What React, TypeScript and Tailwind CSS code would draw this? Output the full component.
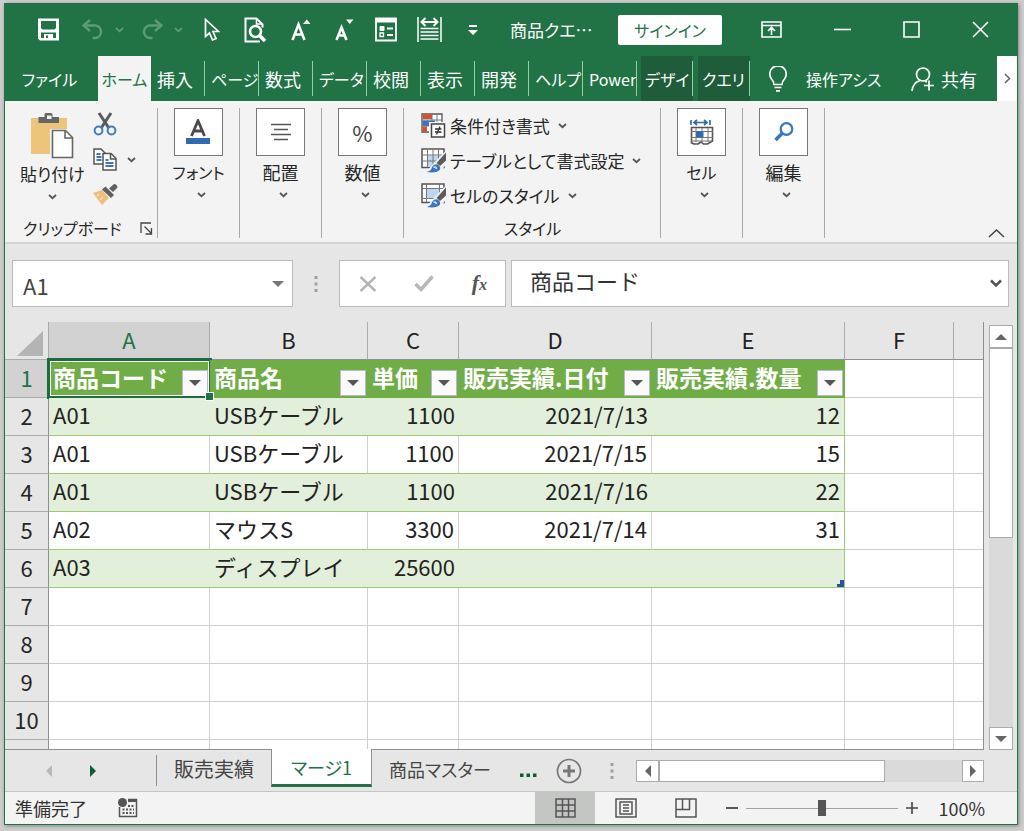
import { useState } from "react";
import type { ReactNode } from "react";

type IconProps = { className?: string };

function Caret({ className = "" }: IconProps) {
  return (
    <svg width="9" height="6" viewBox="0 0 9 6" className={className} fill="none" stroke="currentColor" strokeWidth="1.8">
      <path d="M1 1l3.5 3.2L8 1" />
    </svg>
  );
}

function Triangle({ dir, className = "" }: { dir: "up" | "down" | "left" | "right"; className?: string }) {
  const d = {
    up: "M0 9L6 3l6 6z",
    down: "M0 3h12L6 9z",
    left: "M9 0v12L3 6z",
    right: "M3 0v12l6-6z",
  }[dir];
  return (
    <svg width="12" height="12" viewBox="0 0 12 12" className={className} fill="currentColor">
      <path d={d} />
    </svg>
  );
}

function SaveIcon() {
  return (
    <svg width="23" height="23" viewBox="0 0 23 23">
      <path d="M1 .5h21v22H3L1 20.500z" fill="#fff" />
      <path d="M4 3h15v7l-1.500 1.500h-12L4 10z" fill="#217346" />
      <path d="M4 14.500h15V20H4z" fill="#217346" />
      <path d="M7 16h9v5H7z" fill="#fff" />
      <path d="M9 17.500h2V20H9z" fill="#217346" />
    </svg>
  );
}

function UndoIcon({ className = "" }: IconProps) {
  return (
    <svg width="22" height="21" viewBox="0 0 22 21" className={className} fill="none" stroke="#5c9a78" strokeWidth="2.500">
      <path d="M8 1L1.500 6.500 8 12" />
      <path d="M2 6.500h11.500a6.300 6.300 0 010 12.500h-3" />
    </svg>
  );
}

function CursorIcon() {
  return (
    <svg width="16" height="24" viewBox="0 0 16 24" fill="none" stroke="#fff" strokeWidth="1.700">
      <path d="M1.500 1.500v17l4-3.500 3 7 3.500-1.500-3-7h5.500z" />
    </svg>
  );
}

function PreviewIcon() {
  return (
    <svg width="23" height="26" viewBox="0 0 23 26" fill="none" stroke="#fff">
      <path d="M16 24.500H1.500V1.500h11l6 6v3" strokeWidth="2" />
      <path d="M12.500 1.500V7h5.500" strokeWidth="1.500" />
      <circle cx="11.500" cy="14.500" r="5.500" strokeWidth="2.600" />
      <path d="M15.500 18.500l5.500 5.500" strokeWidth="3.600" />
    </svg>
  );
}

function FontSizeIcon({ grow }: { grow: boolean }) {
  return (
    <svg width="20" height="24" viewBox="0 0 20 24">
      <path
        d={grow ? "M1.500 22L7.500 6.500L13.500 22M4 16.500h7.500" : "M1.500 22L6.500 9.500L11.500 22M3.500 17.500h6"}
        fill="none"
        stroke="#fff"
        strokeWidth="2.600"
      />
      <path d={grow ? "M12 6l3.800-4.500L19.500 6z" : "M11 1.500h7.500L14.800 6z"} fill="#fff" />
    </svg>
  );
}

function FormIcon() {
  return (
    <svg width="22" height="25" viewBox="0 0 22 25" fill="none" stroke="#fff">
      <path d="M1 1.500h20v22H1z" strokeWidth="1.800" />
      <path d="M1 3.500h20" strokeWidth="4" />
      <path d="M5 9.500h4v4H5z" fill="#fff" strokeWidth="1" />
      <path d="M5 16h3.500v3.500H5z" strokeWidth="1.300" />
      <path d="M12 11.500h6M12 18h6" strokeWidth="2" />
    </svg>
  );
}

function FitWidthIcon() {
  return (
    <svg width="25" height="25" viewBox="0 0 25 25" fill="none" stroke="#fff" strokeWidth="1.500">
      <path d="M1 0v25M24 0v25M3.500 11.500h18M3.500 15h18M3.500 18.500h18M3.500 22h18" />
      <path d="M5 5h15M8.500 1L4.500 5l4 4M16.500 1l4 4-4 4" strokeWidth="2" />
    </svg>
  );
}

function PasteIcon() {
  return (
    <svg width="44" height="48" viewBox="0 0 44 48">
      <path d="M1 6h36v36H1z" fill="#ecc47a" />
      <path d="M20 17h17v26H20z" fill="#f3f3f3" />
      <path d="M8.500 11V5h6V2.500q0-1.500 1.500-1.500h5q1.500 0 1.500 1.500V5h6.500v6z" fill="#666" />
      <path d="M17 3.500h4.500V7H17z" fill="#f3f3f3" />
      <path d="M22.500 18.500h13l7 7v20h-20z" fill="#fff" stroke="#666" strokeWidth="1.600" />
      <path d="M35 18.500v7.500h7.500" fill="none" stroke="#666" strokeWidth="1.600" />
    </svg>
  );
}

function ScissorsIcon() {
  return (
    <svg width="24" height="24" viewBox="0 0 24 24" fill="none">
      <path d="M6 1l9.500 14.500M18 1L8.500 15.500" stroke="#5b5b5b" strokeWidth="3" />
      <circle cx="5.500" cy="18.500" r="3.900" stroke="#3f7cc0" strokeWidth="2" />
      <circle cx="18.500" cy="18.500" r="3.900" stroke="#3f7cc0" strokeWidth="2" />
    </svg>
  );
}

function CopyIcon() {
  return (
    <svg width="24" height="23" viewBox="0 0 24 23" fill="none" strokeWidth="1.500">
      <path d="M1 1h7l4 4v11H1z" fill="#fff" stroke="#555" />
      <path d="M3.500 6h4M3.500 9h5M3.500 12h5" stroke="#3b76bd" strokeWidth="1.800" />
      <path d="M10 5.500h8l5 5V22H10z" fill="#fff" stroke="#555" />
      <path d="M17.500 6v5H23" stroke="#555" />
      <path d="M12.500 12h3M12.500 15h8M12.500 18h8" stroke="#3b76bd" strokeWidth="1.800" />
    </svg>
  );
}

function BrushIcon() {
  return (
    <svg width="25" height="22" viewBox="0 0 25 22">
      <path d="M0 10l9-3 7 8-7 7z" fill="#ecc07a" />
      <path d="M4 13l2-2M7 17l3-3" stroke="#f8e3bd" strokeWidth="1.200" />
      <path d="M9 6.500l3.500-3 8.500 8.500-3 3z" fill="#606060" />
      <path d="M16 5.500l5-4.500q3 0 3.500 3.500L20 9z" fill="#606060" />
    </svg>
  );
}

function LauncherIcon() {
  return (
    <svg width="13" height="13" viewBox="0 0 13 13" fill="none" stroke="#444" strokeWidth="1.300">
      <path d="M1 11V1h10" />
      <path d="M4.500 4.500l7 7M11.500 6v6h-6" />
    </svg>
  );
}

function FontIcon() {
  return (
    <svg width="26" height="26" viewBox="0 0 26 26">
      <path d="M6.500 17L13 1.800 19.500 17M9 12h8" fill="none" stroke="#4a4a4a" strokeWidth="2.800" />
      <path d="M1 19h24v6H1z" fill="#2f6bb3" />
    </svg>
  );
}

function AlignIcon() {
  return (
    <svg width="22" height="18" viewBox="0 0 22 18" stroke="#555" strokeWidth="1.500">
      <path d="M1 1.500h20M4 6.500h14M1 11.500h20M4 16.500h14" />
    </svg>
  );
}

function CellsIcon() {
  return (
    <svg width="24" height="26" viewBox="0 0 24 26" fill="none">
      <path d="M1 1v5M20 1v5M3.500 3.500h14M7 1L4 3.500 7 6M14 1l3 2.500L14 6" stroke="#2f6bb3" strokeWidth="1.700" />
      <path d="M1.500 8.500h21V22l-5 3h-4l-2.500-2-3 2h-4l-2.500-1z" fill="#fff" stroke="#555" strokeWidth="1.600" />
      <path d="M6 9v14M12 9v14M18 9v14M1 12.500h22M1 18.500h22M1.500 22h20" stroke="#777" strokeWidth="1" />
      <path d="M6 12.500h7.500v6H6z" fill="#2f6bb3" />
    </svg>
  );
}

function FindIcon() {
  return (
    <svg width="20" height="20" viewBox="0 0 20 20" fill="none" stroke="#3b76bd">
      <circle cx="12.500" cy="7" r="5.800" strokeWidth="2.200" />
      <path d="M8.500 11L1.500 18" strokeWidth="3.600" />
    </svg>
  );
}

function ConditionalIcon() {
  return (
    <svg width="25" height="25" viewBox="0 0 25 25" fill="none">
      <path d="M1 1h20v18H1z" fill="#fff" stroke="#555" strokeWidth="1.300" />
      <path d="M1 7h20M1 13h20M11 1v18M16 1v18" stroke="#777" strokeWidth="1" />
      <path d="M1.500 1.500H11V6H1.500zM1.500 13.500H6V19H1.500z" fill="#d8502f" />
      <path d="M1.500 7.500H14V13H1.500z" fill="#3b76bd" />
      <path d="M8 9h17v16H8z" fill="#f3f3f3" />
      <path d="M10.500 11h13v13h-13z" fill="#fff" stroke="#444" strokeWidth="1.500" />
      <path d="M14 16h6.500M14 19h6.500M19 13.500l-3.500 8" stroke="#333" strokeWidth="1.300" />
    </svg>
  );
}

function StyledGridIcon({ cell }: { cell: boolean }) {
  return (
    <svg width="25" height="25" viewBox="0 0 25 25" fill="none">
      <path d="M1 1h22v18.500H1z" fill="#fff" stroke="#555" strokeWidth="1.500" />
      {cell ? (
        <>
          <path d="M5.500 5.500h13v10h-13z" fill="#bdd5ee" />
          <path d="M1 5.500h22M5.500 1v18M18.500 1v10M1 15.500h12" stroke="#777" strokeWidth="1" />
        </>
      ) : (
        <>
          <path d="M6.500 7.500h16v11h-16z" fill="#bdd5ee" />
          <path d="M1 7h22M1 13h22M6.500 1v18M12 1v18M17.500 1v18" stroke="#777" strokeWidth="1" />
        </>
      )}
      <path d="M25 2.500V16l-6 9H4l9-10z" fill="#f3f3f3" />
      <path d="M25 4.500v8l-6 5.500-3.500-3z" fill="#5b5b5b" />
      <path d="M5.500 24q5-1 5.500-5 2-3.500 5.500-2.500 3.500 1.500 2.500 5Q16 25.500 5.500 24z" fill="#3b76bd" />
      <path d="M12.500 19.500q2.500-1.500 3 1.500" stroke="#d8e6f5" strokeWidth="1.600" />
    </svg>
  );
}

function QuickButton({ label, children }: { label: string; children: ReactNode }) {
  return (
    <button type="button" aria-label={label} className="flex shrink-0 items-center justify-center">
      {children}
    </button>
  );
}

const ribbonTabs = [
  { label: "挿入", size: "text-lg" },
  { label: "ページ", size: "text-base" },
  { label: "数式", size: "text-lg" },
  { label: "データ", size: "text-base" },
  { label: "校閲", size: "text-lg" },
  { label: "表示", size: "text-lg" },
  { label: "開発", size: "text-lg" },
  { label: "ヘルプ", size: "text-base" },
  { label: "Power", size: "text-base" },
];

function TitleBar() {
  return (
    <header className="flex h-[53px] items-center pl-8 text-white">
      <div className="flex items-center">
        <QuickButton label="上書き保存"><SaveIcon /></QuickButton>
        <div className="ml-[22px] flex items-center gap-[11px] text-[#5c9a78]">
          <QuickButton label="元に戻す"><UndoIcon /></QuickButton>
          <Caret />
        </div>
        <div className="ml-[17px] flex items-center gap-[11px] text-[#5c9a78]">
          <QuickButton label="やり直し"><UndoIcon className="-scale-x-100" /></QuickButton>
          <Caret />
        </div>
        <div className="ml-[21px] flex items-center gap-6">
          <QuickButton label="選択"><CursorIcon /></QuickButton>
          <QuickButton label="印刷プレビュー"><PreviewIcon /></QuickButton>
          <QuickButton label="文字を拡大"><FontSizeIcon grow /></QuickButton>
          <QuickButton label="文字を縮小"><FontSizeIcon grow={false} /></QuickButton>
        </div>
        <div className="ml-5 flex items-center gap-5">
          <QuickButton label="フォーム"><FormIcon /></QuickButton>
          <QuickButton label="列の幅"><FitWidthIcon /></QuickButton>
        </div>
        <button type="button" aria-label="クイックアクセスのカスタマイズ" className="ml-[26px]">
          <svg width="10" height="12" viewBox="0 0 10 12" fill="#fff">
            <path d="M1 1h8v2H1zM0 6h10L5 11z" />
          </svg>
        </button>
      </div>
      <span className="ml-8 whitespace-nowrap text-[17px]">商品クエ…</span>
      <div className="ml-auto flex items-center pr-7">
        <button type="button" className="h-[30px] w-[104px] rounded-xs bg-white text-base leading-7 text-[#217346]">サインイン</button>
        <button type="button" aria-label="リボンの表示オプション" className="ml-[39px]">
          <svg width="21" height="17" viewBox="0 0 21 17" fill="none" stroke="#fff" strokeWidth="1.600">
            <path d="M1 1h19v15H1zM1 4.500h19M10.500 14V7M7 10l3.500-3.500L14 10" />
          </svg>
        </button>
        <button type="button" aria-label="最小化" className="ml-[52px]">
          <svg width="17" height="17" viewBox="0 0 17 17" stroke="#fff" strokeWidth="1.600"><path d="M0 8.500h17" /></svg>
        </button>
        <button type="button" aria-label="最大化" className="ml-[52px]">
          <svg width="17" height="17" viewBox="0 0 17 17" fill="none" stroke="#fff" strokeWidth="1.600"><path d="M1 1h15v15H1z" /></svg>
        </button>
        <button type="button" aria-label="閉じる" className="ml-[52px]">
          <svg width="17" height="17" viewBox="0 0 17 17" stroke="#fff" strokeWidth="1.600"><path d="M1 1l15 15M16 1L1 16" /></svg>
        </button>
      </div>
    </header>
  );
}

function RibbonTabs() {
  return (
    <nav className="flex h-[45px] text-lg text-white">
      <button type="button" className="w-[93px] shrink-0 pr-1 text-base">ファイル</button>
      <button type="button" className="w-[53px] shrink-0 bg-[#f3f3f3] text-base text-[#217346]">ホーム</button>
      {ribbonTabs.map((tab) => (
        <button key={tab.label} type="button" className="my-[5px] w-[54px] shrink-0 border-r border-[#8fd0a8] pr-0.5 pl-1.5">
          <span className={`block whitespace-nowrap text-left ${tab.size}`}>{tab.label}</span>
        </button>
      ))}
      <div className="ml-1 flex gap-[5px] text-base">
        {["デザイ", "クエリ"].map((tab) => (
          <button key={tab} type="button" className="flex w-[52px] items-center bg-[#1e5c3a] text-left">
            <span className="flex h-[35px] w-full items-center border-r border-[#8fd0a8] pl-1 whitespace-nowrap">{tab}</span>
          </button>
        ))}
      </div>
      <button type="button" className="ml-[18px] flex shrink-0 items-center">
        <svg width="20" height="26" viewBox="0 0 20 26" className="shrink-0" fill="none" stroke="#fff" strokeWidth="1.700">
          <path d="M6 18.500q0-3-2.500-5.500a8.200 8.200 0 1113 0Q14 15.500 14 18.500zM6.500 21.500h7M8 24.800h4" />
        </svg>
        <span className="ml-[18px] whitespace-nowrap text-base">操作アシス</span>
      </button>
      <button type="button" className="ml-auto flex shrink-0 items-center pr-5">
        <svg width="24" height="26" viewBox="0 0 24 26" fill="none" stroke="#fff" strokeWidth="1.700">
          <circle cx="12" cy="8.500" r="6.500" />
          <path d="M1 25q1-9 8.500-10.500M14 15l2 1M18 14.500v10M13 19.500h10" />
        </svg>
        <span className="ml-1.5">共有</span>
      </button>
      <button type="button" aria-label="タブを右へ" className="flex w-5 shrink-0 items-center justify-center bg-white text-[#666]">
        <svg width="7" height="11" viewBox="0 0 7 11" fill="none" stroke="currentColor" strokeWidth="1.500"><path d="M1 1l4.500 4.500L1 10" /></svg>
      </button>
    </nav>
  );
}

function CollapsedGroup({ label, kana = false, children }: { label: string; kana?: boolean; children: ReactNode }) {
  return (
    <div className="flex w-[82px] shrink-0 justify-center border-r border-[#a8a8a8]">
      <button type="button" className="flex flex-col items-center">
        <span className="flex h-12 w-[49px] items-center justify-center border border-[#777] bg-white">{children}</span>
        <span className={`mt-0.5 whitespace-nowrap leading-7 ${kana ? "text-base" : "text-lg"}`}>{label}</span>
        <Caret className="mt-1.5 ml-1.5 text-[#555]" />
      </button>
    </div>
  );
}

function StyleRow({ label, children }: { label: string; children: ReactNode }) {
  return (
    <button type="button" className="flex h-[35px] items-center whitespace-nowrap text-[17px] leading-8">
      {children}
      <span className="ml-1">{label}</span>
      <Caret className="ml-2 text-[#555]" />
    </button>
  );
}

function Ribbon() {
  return (
    <section className="flex border-b-2 border-[#d2d2d2] bg-[#f3f3f3] pt-[7px] pb-1 text-base text-[#262626]">
      <div className="flex h-[130px] w-[153px] shrink-0 flex-col border-r border-[#a8a8a8]">
        <div className="flex pl-[15px] pt-1">
          <button type="button" className="flex flex-col items-center">
            <PasteIcon />
            <span className="whitespace-nowrap text-[17px] leading-7">貼り付け</span>
            <Caret className="mt-1.5 text-[#555]" />
          </button>
          <div className="ml-2 flex flex-col gap-3">
            <button type="button" aria-label="切り取り" className="self-start"><ScissorsIcon /></button>
            <div className="flex items-center gap-2.5">
              <button type="button" aria-label="コピー"><CopyIcon /></button>
              <Caret className="text-[#555]" />
            </div>
            <button type="button" aria-label="書式のコピー" className="self-start"><BrushIcon /></button>
          </div>
        </div>
        <div className="mt-auto flex items-center justify-between pr-1 pl-[18px] leading-5">
          <span className="whitespace-nowrap">クリップボード</span>
          <button type="button" aria-label="クリップボードの設定"><LauncherIcon /></button>
        </div>
      </div>
      <CollapsedGroup label="フォント" kana><FontIcon /></CollapsedGroup>
      <CollapsedGroup label="配置"><AlignIcon /></CollapsedGroup>
      <CollapsedGroup label="数値"><span className="text-[22px] text-[#444]">%</span></CollapsedGroup>
      <div className="flex w-[257px] shrink-0 flex-col border-r border-[#a8a8a8] pl-[17px]">
        <StyleRow label="条件付き書式"><ConditionalIcon /></StyleRow>
        <StyleRow label="テーブルとして書式設定"><StyledGridIcon cell={false} /></StyleRow>
        <StyleRow label="セルのスタイル"><StyledGridIcon cell /></StyleRow>
        <span className="mt-auto pr-4 text-center leading-5">スタイル</span>
      </div>
      <CollapsedGroup label="セル" kana><CellsIcon /></CollapsedGroup>
      <CollapsedGroup label="編集"><FindIcon /></CollapsedGroup>
      <button type="button" aria-label="リボンを折りたたむ" className="mt-auto mr-3 ml-auto">
        <svg width="17" height="9" viewBox="0 0 17 9" fill="none" stroke="#444" strokeWidth="1.500"><path d="M1 8l7.500-7L16 8" /></svg>
      </button>
    </section>
  );
}

function Dots() {
  return (
    <svg width="4" height="16" viewBox="0 0 4 16" fill="#a0a0a0" className="shrink-0">
      <path d="M.5 0h3v3h-3zM.5 6.500h3v3h-3zM.5 13h3v3h-3z" />
    </svg>
  );
}

function FormulaBar({ value, onChange }: { value: string; onChange: (v: string) => void }) {
  return (
    <section className="flex pt-4 pr-2 pb-[15px] pl-[7px]">
      <div className="flex h-[47px] w-[281px] shrink-0 items-center border border-[#bababa] bg-white pr-2">
        <input aria-label="名前ボックス" defaultValue="A1" className="min-w-0 flex-1 bg-transparent pt-1 pl-2.5 text-[22px] text-[#444] outline-none" />
        <Triangle dir="down" className="text-[#777]" />
      </div>
      <div className="flex w-[46px] shrink-0 items-center justify-center"><Dots /></div>
      <div className="flex h-[47px] w-[167px] shrink-0 items-center justify-between border border-[#bababa] bg-white pr-[18px] pl-[19px]">
        <button type="button" aria-label="キャンセル">
          <svg width="18" height="16" viewBox="0 0 18 16" stroke="#b5b5b5" strokeWidth="2.400"><path d="M1.500 1l15 14M16.500 1l-15 14" /></svg>
        </button>
        <button type="button" aria-label="入力">
          <svg width="20" height="17" viewBox="0 0 20 17" fill="none" stroke="#b8b8b8" strokeWidth="3.500"><path d="M1.500 9l5.500 5.500L18.500 1.500" /></svg>
        </button>
        <button type="button" aria-label="関数の挿入" className="font-['Liberation_Serif',serif] text-[22px] leading-6 font-bold text-[#555] italic">
          f<span className="text-base">x</span>
        </button>
      </div>
      <div className="ml-[5px] flex h-[47px] min-w-0 flex-1 items-center border border-[#bababa] bg-white pr-1.5">
        <input
          aria-label="数式バー"
          value={value}
          onChange={(e) => onChange(e.target.value)}
          className="min-w-0 flex-1 bg-transparent pb-1.5 pl-[18px] text-[22px] text-[#333] outline-none [font-feature-settings:normal]"
        />
        <svg width="12" height="9" viewBox="0 0 12 9" fill="none" stroke="#555" strokeWidth="2.600"><path d="M1 1.500l5 5 5-5" /></svg>
      </div>
    </section>
  );
}

const columns = ["A", "B", "C", "D", "E", "F", ""];
const fields = ["商品コード", "商品名", "単価", "販売実績.日付", "販売実績.数量"];
const records = [
  ["A01", "USBケーブル", "1100", "2021/7/13", "12"],
  ["A01", "USBケーブル", "1100", "2021/7/15", "15"],
  ["A01", "USBケーブル", "1100", "2021/7/16", "22"],
  ["A02", "マウスS", "3300", "2021/7/14", "31"],
  ["A03", "ディスプレイ", "25600", "", ""],
];
const emptyRows = ["7", "8", "9", "10"];
const rowHead = "border-r border-b border-[#ababab] border-r-[#8f8f8f] bg-[#e6e6e6] p-0 pb-1 text-center font-normal text-[#262626]";
const blankCell = "border-r border-b border-[#d0d0d0] p-0";

function cellClass(banded: boolean, column: number) {
  const align = column > 1 ? "text-right" : "text-left";
  const fill = banded ? "bg-[#e2efda]" : "bg-white";
  const edge = column === 4 ? "border-r border-r-[#9ccb78]" : banded ? "" : "border-r border-r-[#d0d0d0]";
  return `relative whitespace-nowrap border-b border-b-[#9ccb78] px-1 pt-0 pb-1.5 ${align} ${fill} ${edge}`;
}

function Sheet() {
  return (
    <table className="min-w-0 flex-1 table-fixed border-separate border-spacing-0 border-r border-b border-[#8f8f8f] bg-white text-[22px] leading-7 text-[#222] [font-feature-settings:normal]">
      <colgroup>
        <col className="w-11" />
        <col className="w-[161px]" />
        <col className="w-[158px]" />
        <col className="w-[91px]" />
        <col className="w-[193px]" />
        <col className="w-[193px]" />
        <col className="w-[109px]" />
        <col />
      </colgroup>
      <thead>
        <tr className="h-[38px] bg-[#e6e6e6]">
          <th aria-label="すべて選択" className="border-r border-b border-[#ababab] p-0">
            <svg width="26" height="25" viewBox="0 0 26 25" className="mt-1.5 ml-3" fill="#b4b4b4"><path d="M26 0v25H0z" /></svg>
          </th>
          {columns.map((c, i) => (
            <th
              key={i}
              scope="col"
              className={
                i === 0
                  ? "border-r border-b border-[#ababab] bg-[#d2d2d2] p-0 pb-1 font-normal text-[#217346]"
                  : i === 6
                    ? "border-b border-b-[#8f8f8f] p-0"
                    : "border-r border-b border-[#ababab] border-b-[#8f8f8f] p-0 pb-1 font-normal"
              }
            >
              {c}
            </th>
          ))}
        </tr>
      </thead>
      <tbody>
        <tr className="h-[38px]">
          <th scope="row" className="border-r border-b border-[#ababab] bg-[#d2d2d2] p-0 pb-1 text-center font-normal text-[#217346]">1</th>
          {fields.map((f, i) => (
            <th key={f} className="relative border-b border-[#70ad47] bg-[#70ad47] p-0 text-left text-[23px] text-white">
              <div className="flex items-center justify-between pr-0.5 pl-1">
                <span className="whitespace-nowrap pb-1">{f}</span>
                <button type="button" aria-label={`${f}の絞り込み`} className="mt-2 flex size-[26px] shrink-0 items-center justify-center border border-[#b9b9cc] bg-[#fafafa] text-[#555]">
                  <Triangle dir="down" />
                </button>
              </div>
              {i === 0 && (
                <>
                  <div className="pointer-events-none absolute -inset-x-0.5 -top-0.5 -bottom-0.5 border-3 border-[#1e6b3e] ring-1 ring-white ring-inset" />
                  <div className="absolute -right-1 -bottom-1 z-10 size-[9px] border border-white bg-[#217346]" />
                </>
              )}
            </th>
          ))}
          <td className={blankCell} />
          <td className="border-b border-[#d0d0d0] p-0" />
        </tr>
        {records.map((rec, r) => (
          <tr key={r} className="h-[38px]">
            <th scope="row" className={rowHead}>{r + 2}</th>
            {rec.map((v, c) => (
              <td key={c} className={cellClass(r % 2 === 0, c)}>
                {v}
                {r === 4 && c === 4 && (
                  <svg width="7" height="7" viewBox="0 0 7 7" className="absolute right-0 bottom-0" fill="#2f4fa0"><path d="M7 0v7H0V4h3V0z" /></svg>
                )}
              </td>
            ))}
            <td className={blankCell} />
            <td className="border-b border-[#d0d0d0] p-0" />
          </tr>
        ))}
        {emptyRows.map((n) => (
          <tr key={n} className="h-[38px]">
            <th scope="row" className={rowHead}>{n}</th>
            {fields.map((f) => <td key={f} className={blankCell} />)}
            <td className={blankCell} />
            <td className="border-b border-[#d0d0d0] p-0" />
          </tr>
        ))}
        <tr className="h-[9px]">
          <th aria-hidden="true" className="border-r border-[#8f8f8f] bg-[#e6e6e6] p-0" />
          {fields.map((f) => <td key={f} className="border-r border-[#d0d0d0] p-0" />)}
          <td className="border-r border-[#d0d0d0] p-0" />
          <td className="p-0" />
        </tr>
      </tbody>
    </table>
  );
}

const scrollButton = "flex shrink-0 items-center justify-center border border-[#ababab] bg-white text-[#666]";

const sheetTabs = [
  { label: "販売実績", size: "text-xl" },
  { label: "マージ1", size: "text-lg" },
  { label: "商品マスター", size: "text-lg" },
];

function SheetTabs() {
  const [active, setActive] = useState("マージ1");
  return (
    <nav className="flex h-[42px] items-center border-b border-[#c4c4c4] text-[#444]">
      <button type="button" aria-label="前のシート" className="ml-[38px] text-[#b8b8b8]"><Triangle dir="left" /></button>
      <button type="button" aria-label="次のシート" className="ml-8 text-[#0f5c30]"><Triangle dir="right" /></button>
      <div className="ml-[57px] h-[31px] w-px bg-[#8f8f8f]" />
      <div className="flex self-stretch">
        {sheetTabs.map((t) => (
          <button
            key={t.label}
            type="button"
            onClick={() => setActive(t.label)}
            className={
              t.label === active
                ? `-mt-px h-[38px] w-[101px] border-x border-b-3 border-x-[#8f8f8f] border-b-[#217346] bg-white text-[#217346] ${t.size}`
                : `h-[38px] px-[17px] whitespace-nowrap ${t.size}`
            }
          >
            {t.label}
          </button>
        ))}
      </div>
      <button type="button" aria-label="他のシート" className="ml-3 text-[#0f5c30]">
        <svg width="17" height="12" viewBox="0 0 17 12" fill="currentColor"><path d="M0 8.500h3.500V12H0zM6.500 8.500H10V12H6.500zM13 8.500h3.500V12H13z" /></svg>
      </button>
      <button type="button" aria-label="新しいシート" className="ml-[19px]">
        <svg width="26" height="26" viewBox="0 0 26 26" fill="none" stroke="#777"><circle cx="13" cy="13" r="11.500" strokeWidth="1.700" /><path d="M13 7v12M7 13h12" strokeWidth="3" /></svg>
      </button>
      <div className="ml-auto flex items-center"><Dots /></div>
      <div className="mr-[33px] ml-[22px] flex h-[22px] w-[348px] shrink-0">
        <button type="button" aria-label="左へスクロール" className={`${scrollButton} w-[23px]`}><Triangle dir="left" /></button>
        <div className="flex flex-1 bg-[#dadada]">
          <div className="w-[226px] border border-[#ababab] bg-white" />
        </div>
        <button type="button" aria-label="右へスクロール" className={`${scrollButton} w-[22px]`}><Triangle dir="right" /></button>
      </div>
    </nav>
  );
}

function StatusBar() {
  const [zoom, setZoom] = useState(50);
  return (
    <footer className="flex h-8 items-center bg-[#f3f3f3] text-lg text-[#333]">
      <span className="ml-2.5">準備完了</span>
      <button type="button" aria-label="マクロの記録" className="ml-[31px]">
        <svg width="20" height="20" viewBox="0 0 20 20" fill="none" stroke="#555" strokeWidth="1.500">
          <path d="M1.500 9v9.500h17v-17H10" />
          <path d="M10 2.500h8.500" strokeWidth="3" />
          <circle cx="4.500" cy="4.500" r="4.500" fill="#555" stroke="none" />
          <path d="M4.500 11.500h11.500M4.500 15h11.500M10 8h6" strokeWidth="1.800" strokeDasharray="2 1.500" />
        </svg>
      </button>
      <div className="ml-auto flex self-stretch">
        <button type="button" aria-label="標準" className="flex w-[60px] items-center justify-center bg-[#c4c6c4]">
          <svg width="21" height="20" viewBox="0 0 21 20" fill="none" stroke="#555" strokeWidth="1.500"><path d="M1 1h19v18H1zM1 7h19M1 13h19M7.500 1v18M13.500 1v18" /></svg>
        </button>
        <button type="button" aria-label="ページレイアウト" className="flex w-[61px] items-center justify-center">
          <svg width="22" height="20" viewBox="0 0 22 20" fill="none" stroke="#555" strokeWidth="1.500"><path d="M1 1h20v18H1zM5 4h12v12H5zM8 7h6M8 10h6M8 13h6" /></svg>
        </button>
        <button type="button" aria-label="改ページプレビュー" className="flex w-[60px] items-center justify-center">
          <svg width="22" height="20" viewBox="0 0 22 20" fill="none" stroke="#555" strokeWidth="1.500"><path d="M1 1h20v18H1zM1 11.500h13.500V1M7.500 1v10.500" /></svg>
        </button>
      </div>
      <button type="button" aria-label="縮小" className="ml-2.5">
        <svg width="12" height="12" viewBox="0 0 12 12" stroke="#444" strokeWidth="1.800"><path d="M0 6h12" /></svg>
      </button>
      <input
        type="range"
        aria-label="ズーム"
        min={0}
        max={100}
        value={zoom}
        onChange={(e) => setZoom(Number(e.target.value))}
        className="mx-2 h-4 w-[152px] appearance-none bg-[linear-gradient(#a0a0a0,#a0a0a0)] bg-[length:100%_1px] bg-center bg-no-repeat [&::-webkit-slider-thumb]:h-4 [&::-webkit-slider-thumb]:w-2 [&::-webkit-slider-thumb]:appearance-none [&::-webkit-slider-thumb]:bg-[#555]"
      />
      <button type="button" aria-label="拡大">
        <svg width="12" height="12" viewBox="0 0 12 12" stroke="#444" strokeWidth="1.600"><path d="M0 6h12M6 0v12" /></svg>
      </button>
      <span className="mr-8 ml-5">100%</span>
    </footer>
  );
}

export default function App() {
  const [formula, setFormula] = useState("商品コード");
  return (
    <div className="min-h-screen bg-[#cdcdcd] pt-[3px] pr-[6px] pb-[6px] pl-1 font-['Noto_Sans_CJK_JP',sans-serif] [font-feature-settings:'palt']">
      <div className="border border-t-0 border-[#217346] bg-[#217346] shadow-[1px_1px_4px_#888]">
        <TitleBar />
        <RibbonTabs />
        <div className="bg-[#e6e6e6]">
          <Ribbon />
          <FormulaBar value={formula} onChange={setFormula} />
          <div className="flex">
            <Sheet />
            <div className="mt-[3px] mr-1 ml-[5px] flex w-6 shrink-0 flex-col bg-[#dadada]">
              <button type="button" aria-label="上へスクロール" className={`${scrollButton} h-[23px]`}><Triangle dir="up" /></button>
              <div className="h-[190px] border border-[#ababab] bg-white" />
              <button type="button" aria-label="下へスクロール" className={`${scrollButton} mt-auto h-[23px]`}><Triangle dir="down" /></button>
            </div>
          </div>
          <SheetTabs />
        </div>
        <StatusBar />
      </div>
    </div>
  );
}
